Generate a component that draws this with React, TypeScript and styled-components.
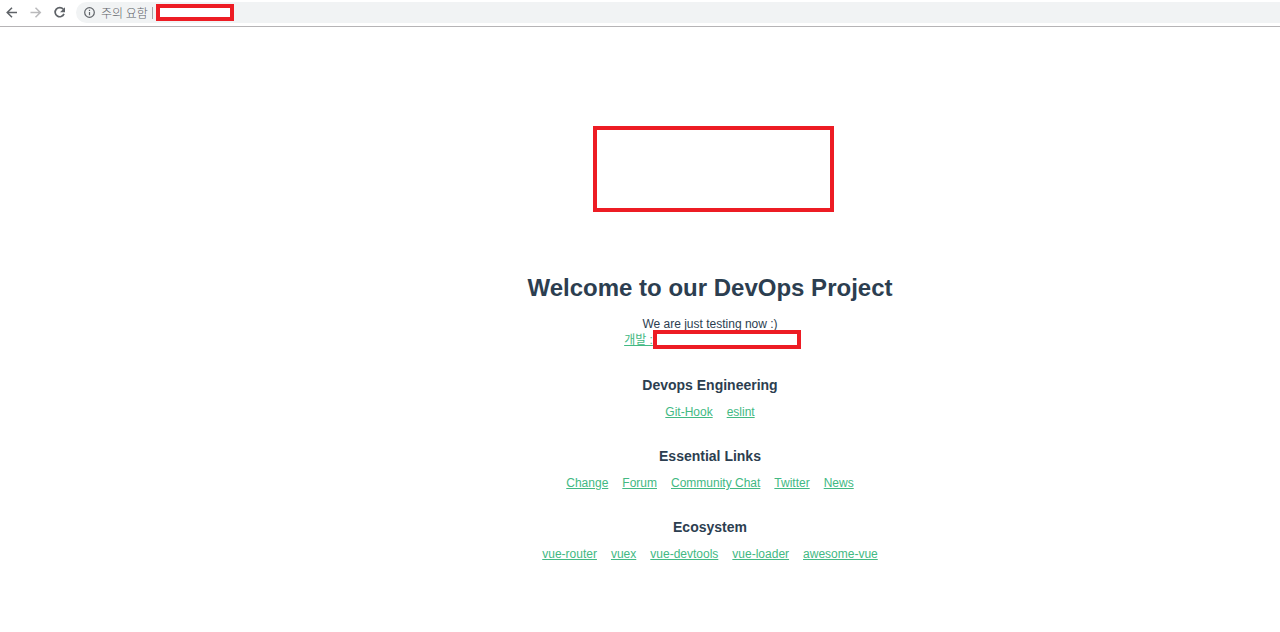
import React from "react";
import styled, { createGlobalStyle } from "styled-components";

const GlobalStyle = createGlobalStyle`
  body {
    margin: 0;
    background: #fff;
    font-family: "Liberation Sans", "Noto Sans CJK KR", sans-serif;
    font-size: 12px;
    line-height: 16px;
    color: #2c3e50;
  }
`;

const Toolbar = styled.header`
  display: flex;
  align-items: center;
  height: 21px;
  padding: 2px 0 3px 4px;
  border-bottom: 1px solid #b6b4b6;
`;

const NavButton = styled.button`
  display: flex;
  align-items: center;
  justify-content: center;
  width: 16px;
  height: 17px;
  margin-right: 8px;
  padding: 0;
  border: 0;
  background: none;
  color: #5f6368;

  &:disabled {
    color: #bababc;
  }
`;

const AddressBar = styled.div`
  display: flex;
  align-items: center;
  flex: 1;
  height: 21px;
  padding-left: 8px;
  border-radius: 11px 0 0 11px;
  background: #f1f3f4;
  color: #5f6368;
`;

const SecurityLabel = styled.span`
  margin-left: 6px;
  font-family: "Noto Sans CJK KR", sans-serif;
  font-size: 12px;
  font-weight: 300;
  line-height: 16px;
`;

const Divider = styled.span`
  width: 1px;
  height: 12px;
  margin: 0 3px 0 4px;
  background: #a4a6a9;
`;

const Redaction = styled.div<{ $width: number; $height: number }>`
  box-sizing: border-box;
  flex: none;
  width: ${(p) => p.$width}px;
  height: ${(p) => p.$height}px;
  border: 4px solid #ed1c24;
  background: #fff;
`;

const Page = styled.main`
  display: flex;
  flex-direction: column;
  align-items: center;
  padding: 99px 0 40px 140px;
  text-align: center;
`;

const LogoArea = styled.div`
  padding-left: 7px;
`;

const Title = styled.h1`
  margin: 60px 0 13px;
  font-size: 24px;
  line-height: 32px;
`;

const Intro = styled.p`
  margin: 0;
  line-height: 15px;
`;

const DevLine = styled.div`
  display: flex;
  align-items: center;
  height: 15px;
  margin-bottom: 2px;
  padding-left: 5px;
`;

const TextLink = styled.a`
  color: #42b983;
  text-decoration: underline;
  white-space: pre;
`;

const Section = styled.section`
  margin-top: 28px;
`;

const SectionTitle = styled.h3`
  margin: 0 0 11px;
  font-size: 14px;
  line-height: 16px;
`;

const LinkList = styled.ul`
  display: flex;
  justify-content: center;
  gap: 14px;
  margin: 0;
  padding: 0;
  list-style: none;
`;

const sections = [
  { title: "Devops Engineering", links: ["Git-Hook", "eslint"] },
  { title: "Essential Links", links: ["Change", "Forum", "Community Chat", "Twitter", "News"] },
  { title: "Ecosystem", links: ["vue-router", "vuex", "vue-devtools", "vue-loader", "awesome-vue"] },
];

const Arrow = ({ back }: { back?: boolean }) => (
  <svg width="16" height="17" viewBox="0 0 16 17" fill="none" stroke="currentColor" strokeWidth="1.5">
    {back ? <path d="M13 8.5H3.5M8 3.7L3.2 8.5 8 13.3" /> : <path d="M2.5 8.5H12M7.5 3.7l4.8 4.8-4.8 4.8" />}
  </svg>
);

const Reload = () => (
  <svg width="16" height="17" viewBox="0 0 16 17" fill="none">
    <path d="M11.3 5.2A4.6 4.6 0 1 0 12 9.9" stroke="currentColor" strokeWidth="1.7" />
    <path d="M13 3.2v5H8z" fill="currentColor" />
  </svg>
);

const Info = () => (
  <svg width="11" height="11" viewBox="0 0 11 11" fill="none" stroke="currentColor">
    <circle cx="5.5" cy="5.5" r="4.8" strokeWidth="1.2" />
    <path d="M5.5 5v3.2M5.5 2.8v1.2" strokeWidth="1.2" />
  </svg>
);

export default function App() {
  return (
    <>
      <GlobalStyle />
      <Toolbar>
        <NavButton aria-label="Back"><Arrow back /></NavButton>
        <NavButton aria-label="Forward" disabled><Arrow /></NavButton>
        <NavButton aria-label="Reload"><Reload /></NavButton>
        <AddressBar>
          <Info />
          <SecurityLabel>주의 요함</SecurityLabel>
          <Divider />
          <Redaction $width={78} $height={17} />
        </AddressBar>
      </Toolbar>
      <Page>
        <LogoArea>
          <Redaction $width={241} $height={86} />
        </LogoArea>
        <Title>Welcome to our DevOps Project</Title>
        <Intro>We are just testing now :)</Intro>
        <DevLine>
          <TextLink href="#dev">개발 :</TextLink>
          <Redaction $width={148} $height={19} />
        </DevLine>
        {sections.map((section) => (
          <Section key={section.title}>
            <SectionTitle>{section.title}</SectionTitle>
            <LinkList>
              {section.links.map((link) => (
                <li key={link}>
                  <TextLink href={`#${link}`}>{link}</TextLink>
                </li>
              ))}
            </LinkList>
          </Section>
        ))}
      </Page>
    </>
  );
}
